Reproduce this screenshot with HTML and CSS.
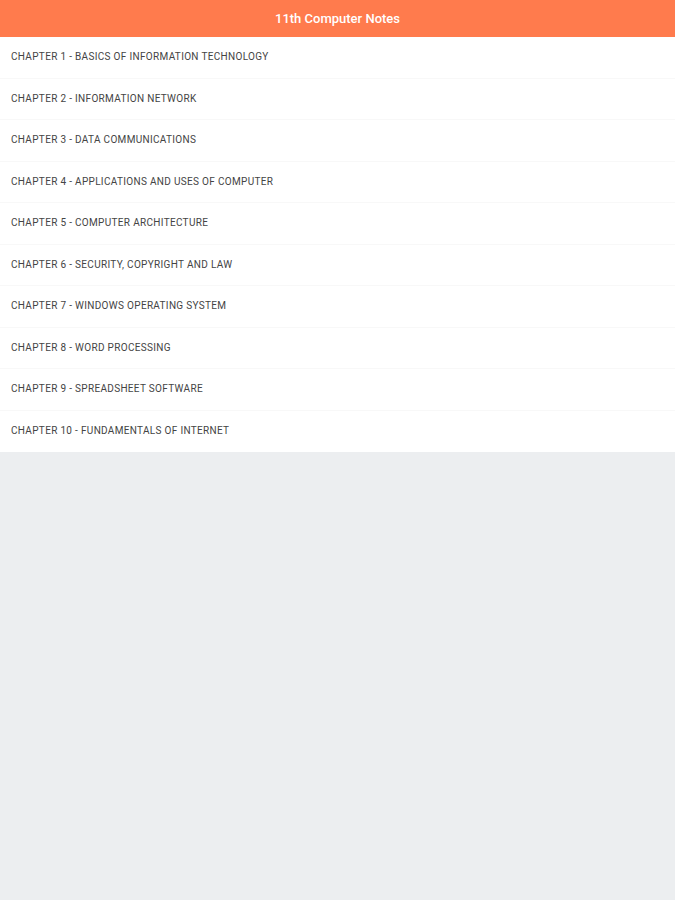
FILE: index.html
```html
<!DOCTYPE html>
<html lang="en">
<head>
    <meta charset="UTF-8">
    <meta name="viewport" content="width=device-width, initial-scale=1.0">
    <title>11th Computer Notes</title>
    <link rel="stylesheet" href="styles.css">
</head>
<body>
    <div class="header">11th Computer Notes</div>
    <ul class="chapters">
        <li>CHAPTER 1 - BASICS OF INFORMATION TECHNOLOGY</li>
        <li>CHAPTER 2 - INFORMATION NETWORK</li>
        <li>CHAPTER 3 - DATA COMMUNICATIONS</li>
        <li>CHAPTER 4 - APPLICATIONS AND USES OF COMPUTER</li>
        <li>CHAPTER 5 - COMPUTER ARCHITECTURE</li>
        <li>CHAPTER 6 - SECURITY, COPYRIGHT AND LAW</li>
        <li>CHAPTER 7 - WINDOWS OPERATING SYSTEM</li>
        <li>CHAPTER 8 - WORD PROCESSING</li>
        <li>CHAPTER 9 - SPREADSHEET SOFTWARE</li>
        <li>CHAPTER 10 - FUNDAMENTALS OF INTERNET</li>
    </ul>
</body>
</html>
```

FILE: styles.css
```css
body {
    margin: 0;
    background-color: #eceef0;
    font-family: Roboto, "Liberation Sans", sans-serif;
}
.header {
    height: 37px;
    line-height: 37px;
    background-color: #ff7b4d;
    color: #fff;
    text-align: center;
    font-size: 13px;
    font-weight: 500;
}
.chapters {
    list-style: none;
    margin: 0;
    padding: 0;
    background-color: #fff;
}
.chapters li {
    height: 41.5px;
    line-height: 40px;
    padding-left: 11px;
    font-size: 10px;
    letter-spacing: 0.32px;
    color: #444;
    border-bottom: 1px solid #f8f8f8;
    box-sizing: border-box;
}
.chapters li:last-child {
    border-bottom: none;
}
```
